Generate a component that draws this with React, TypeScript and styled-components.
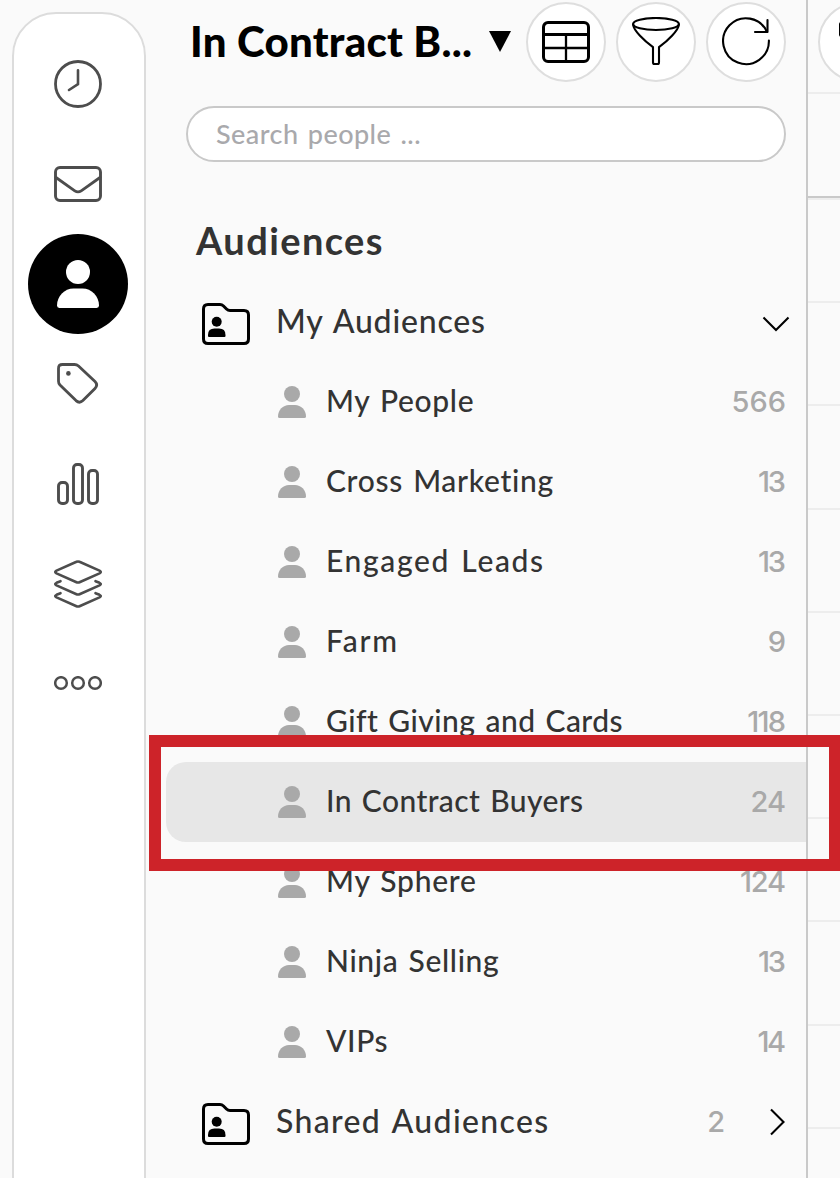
import React from "react";
import styled, { createGlobalStyle } from "styled-components";

const GlobalStyle = createGlobalStyle`
  * { box-sizing: border-box; }
  body {
    margin: 0;
    background: #fafafa;
    font-family: Lato, "Liberation Sans", sans-serif;
    color: #333;
  }
  svg { display: block; flex: none; }
`;

const Page = styled.div`
  position: relative;
  display: flex;
  width: 840px;
  height: 1178px;
  overflow: hidden;
  background: #fafafa;
`;

const Rail = styled.nav`
  flex: none;
  display: flex;
  flex-direction: column;
  align-items: flex-start;
  width: 134px;
  height: 1210px;
  margin: 12px 0 0 12px;
  padding: 20px 0 0 14px;
  border: 2px solid #dcdcdc;
  border-radius: 44px;
  background: #fff;
`;

const RailButton = styled.button<{ $active?: boolean }>`
  flex: none;
  display: flex;
  align-items: center;
  justify-content: center;
  width: 100px;
  height: 100px;
  padding: 0;
  border: 0;
  border-radius: 50%;
  background: ${(p) => (p.$active ? "#000" : "transparent")};
  color: ${(p) => (p.$active ? "#fff" : "#4d4d4d")};
`;

const Sidebar = styled.aside`
  flex: none;
  display: flex;
  flex-direction: column;
  width: 662px;
  padding-left: 20px;
  border-right: 2px solid #c9c9c9;
`;

const Header = styled.header`
  display: flex;
  align-items: center;
  gap: 10px;
  height: 80px;
  margin-top: 2px;
  padding: 0 20px 0 24px;
`;

const Title = styled.h1`
  display: flex;
  align-items: center;
  flex: 1;
  margin: 0;
  padding-bottom: 2px;
  color: #000;
  font-size: 42px;
  font-weight: 900;
  line-height: 50px;
  letter-spacing: 0.25px;
  white-space: nowrap;
`;

const Caret = styled.svg`
  margin: 1px 0 0 17px;
`;

const RoundButton = styled.button`
  flex: none;
  display: flex;
  align-items: center;
  justify-content: center;
  width: 80px;
  height: 80px;
  padding: 0;
  border: 2px solid #dedede;
  border-radius: 50%;
  background: #fff;
  color: #000;
`;

const Search = styled.div`
  display: flex;
  align-items: center;
  height: 56px;
  margin: 24px 20px 0;
  padding: 0 28px 2px;
  border: 2px solid #c9c9c9;
  border-radius: 28px;
  background: #fff;
  color: #a9a9ac;
  font-size: 27px;
  font-weight: 500;
  letter-spacing: 0.45px;
  word-spacing: 2px;
`;

const SectionTitle = styled.h2`
  margin: 40px 0 0 30px;
  height: 80px;
  font-size: 38px;
  font-weight: 700;
  line-height: 76px;
  letter-spacing: 1.4px;
`;

const Row = styled.div<{ $selected?: boolean }>`
  flex: none;
  display: flex;
  align-items: center;
  height: 80px;
  padding: 0 20px 0 112px;
  border-radius: 20px 0 0 20px;
  background: ${(p) => (p.$selected ? "#e7e7e7" : "transparent")};
`;

const GroupRow = styled(Row)`
  padding: 0 20px 0 36px;
`;

const Label = styled.span<{ $track: number; $group?: boolean }>`
  flex: 1;
  margin-left: ${(p) => (p.$group ? 26 : 20)}px;
  padding-bottom: ${(p) => (p.$group ? 3 : 5)}px;
  font-size: ${(p) => (p.$group ? 32 : 30)}px;
  font-weight: 500;
  letter-spacing: ${(p) => p.$track}px;
  word-spacing: 2px;
  white-space: nowrap;
`;

const Count = styled.span<{ $track?: number }>`
  margin-right: ${(p) => -(p.$track ?? 0)}px;
  padding-bottom: 1px;
  color: #a9a9a9;
  font-family: Inter, sans-serif;
  font-size: 29px;
  font-weight: 500;
  letter-spacing: ${(p) => p.$track ?? 0}px;
`;

const FolderIcon = styled.svg`
  margin-top: 4px;
`;

const ArrowDown = styled.svg`
  margin: 4px -4px 0 0;
`;

const ArrowRight = styled.svg`
  margin: 0 1px 0 44px;
`;

const Panel = styled.main`
  flex: 1;
  min-width: 0;
  overflow: hidden;
`;

const PanelBar = styled.div`
  height: 94px;
  padding: 2px 0 0 10px;
  border-bottom: 2px solid #ededed;
`;

const PanelHead = styled.div`
  height: 104px;
  border-bottom: 2px solid #c9c9c9;
`;

const PanelRows = styled.div`
  border-top: 2px solid #ededed;
`;

const PanelRow = styled.div`
  height: 103.2px;
  border-bottom: 2px solid #ededed;
`;

const Highlight = styled.div`
  position: absolute;
  left: 149px;
  top: 735px;
  width: 692px;
  height: 136px;
  border: 12px solid #cd2329;
`;

const stroke = {
  fill: "none",
  stroke: "currentColor",
  strokeLinecap: "round" as const,
  strokeLinejoin: "round" as const,
};

const Person = ({ width }: { width: number }) => (
  <svg width={width} height={(width * 32) / 28} viewBox="0 0 28 32" fill="currentColor">
    <circle cx="14" cy="8" r="8" />
    <path d="M0 30.4C0 24 5 19 11 19h6c6 0 11 5 11 11.4q0 1.6-1.6 1.6H1.6Q0 32 0 30.4Z" />
  </svg>
);

const PersonMark = styled.span`
  flex: none;
  color: #a9a9a9;
`;

const Clock = () => (
  <svg width="48" height="48" viewBox="0 0 48 48" {...stroke} strokeWidth="2.8">
    <circle cx="24" cy="24" r="22.5" />
    <path d="M24 10.2V24.2L15 30" strokeWidth="2.6" />
  </svg>
);

const Mail = () => (
  <svg width="48" height="36" viewBox="0 0 48 36" {...stroke} strokeWidth="2.9">
    <rect x="1.5" y="1.5" width="45" height="33" rx="4.5" />
    <path d="M2 11.5 20.8 24.8Q24 27 27.2 24.8L46 11.5" strokeWidth="2.8" />
  </svg>
);

const Tag = () => (
  <svg width="48" height="48" viewBox="0 0 48 48" {...stroke} strokeWidth="2.8">
    <path d="M8.5 4.5H20.5Q22.8 4.5 24.5 6L41 21.5Q44.3 25 41 28.4L28.9 40.6Q25.5 43.8 22 40.6L6 25Q4.500 23.400 4.500 21.200V8.500Q4.500 4.500 8.500 4.500Z" />
    <circle cx="14.400" cy="13.400" r="2.300" fill="currentColor" stroke="none" />
  </svg>
);

const Bars = () => (
  <svg width="48" height="48" viewBox="0 0 48 48" {...stroke} strokeWidth="2.9">
    <rect x="4.5" y="22.5" width="9" height="21" rx="3.5" />
    <rect x="19.5" y="4.5" width="9" height="39" rx="3.5" />
    <rect x="34.5" y="10.5" width="9" height="33" rx="3.5" />
  </svg>
);

const Layers = () => (
  <svg width="48" height="48" viewBox="0 0 48 48" {...stroke} strokeWidth="2.6">
    <path d="M22.500 1.800Q24 1.100 25.500 1.800L45.500 10.600Q48 12 45.500 13.400L25.500 22.200Q24 22.900 22.500 22.200L2.500 13.400Q0 12 2.500 10.600Z" />
    <path d="M6.500 21.200 2.500 22.800Q0 24 2.500 25.400L22.500 34.200Q24 34.900 25.500 34.200L45.500 25.400Q48 24 45.500 22.800L41.500 21.200" />
    <path d="M6.500 33.200 2.500 34.800Q0 36 2.500 37.400L22.500 46.200Q24 46.900 25.500 46.200L45.500 37.400Q48 36 45.500 34.800L41.500 33.200" />
  </svg>
);

const Dots = () => (
  <svg width="48" height="16" viewBox="0 0 48 16" {...stroke} strokeWidth="2.5">
    <circle cx="7" cy="7" r="5.8" />
    <circle cx="24" cy="7" r="5.8" />
    <circle cx="41" cy="7" r="5.8" />
  </svg>
);

const Table = () => (
  <svg width="48" height="48" viewBox="0 0 48 48" {...stroke} strokeWidth="3">
    <rect x="1.5" y="4.5" width="45" height="39" rx="4.5" />
    <path d="M2 16.5H46" />
    <path d="M2 30H46M24 17V43" strokeWidth="2.3" strokeLinecap="butt" />
  </svg>
);

const Funnel = () => (
  <svg width="48" height="50" viewBox="0 0 48 50" {...stroke} strokeWidth="2.1">
    <ellipse cx="24" cy="7" rx="22.900" ry="6" />
    <path d="M1.100 7.500C1.500 13.500 12.500 24 21 30.200V45.500Q21 47 22.500 47H25.500Q27 47 27 45.500V30.200C35.500 24 46.500 13.500 46.900 7.500" />
  </svg>
);

const Refresh = () => (
  <svg width="48" height="50" viewBox="0 0 48 50" {...stroke} strokeWidth="2.1">
    <path d="M46.900 23.500A22.900 22.900 0 1 1 45 15" />
    <path d="M45.500 3V15H33" />
  </svg>
);

const Archive = () => (
  <svg width="38" height="40" viewBox="0 0 38 40" {...stroke} strokeWidth="3">
    <rect x="1.500" y="1.500" width="35" height="12" rx="1" />
    <path d="M5 14V35Q5 38.500 8.500 38.500H29.500Q33 38.500 33 35V14M14 21H24" />
  </svg>
);

const Folder = () => (
  <FolderIcon width="48" height="42" viewBox="0 0 48 42" fill="#000">
    <path
      d="M6 1.500H18Q20 1.500 21.500 3L24.500 6Q26 7.500 28 7.500H42Q46.500 7.500 46.500 12V36Q46.500 40.500 42 40.500H6Q1.500 40.500 1.500 36V6Q1.500 1.500 6 1.500Z"
      fill="none"
      stroke="#000"
      strokeWidth="3"
    />
    <circle cx="14.700" cy="18.700" r="5" />
    <path d="M6 33V32Q6 25.600 12.500 25.600H17Q23.500 25.600 23.500 32V33Q23.500 34 22.500 34H7Q6 34 6 33Z" />
  </FolderIcon>
);

const people = [
  { name: "My People", count: 566, track: 0.65, countTrack: 0 },
  { name: "Cross Marketing", count: 13, track: 0.68, countTrack: -2.2 },
  { name: "Engaged Leads", count: 13, track: 1.65, countTrack: -2.2 },
  { name: "Farm", count: 9, track: 1.8, countTrack: 0 },
  { name: "Gift Giving and Cards", count: 118, track: 0.45, countTrack: -1.8 },
  { name: "In Contract Buyers", count: 24, track: 0.4, countTrack: -1 },
  { name: "My Sphere", count: 124, track: 0.75, countTrack: -1.3 },
  { name: "Ninja Selling", count: 13, track: 0.65, countTrack: -2.2 },
  { name: "VIPs", count: 14, track: 0.6, countTrack: -2.5 },
];

const selected = "In Contract Buyers";

export default function App() {
  return (
    <Page>
      <GlobalStyle />
      <Rail>
        <RailButton><Clock /></RailButton>
        <RailButton><Mail /></RailButton>
        <RailButton $active><Person width={42} /></RailButton>
        <RailButton><Tag /></RailButton>
        <RailButton><Bars /></RailButton>
        <RailButton><Layers /></RailButton>
        <RailButton><Dots /></RailButton>
      </Rail>
      <Sidebar>
        <Header>
          <Title>
            In Contract B...
            <Caret width="22" height="21" viewBox="0 0 22 21">
              <path d="M0 0H22L11 21Z" />
            </Caret>
          </Title>
          <RoundButton><Table /></RoundButton>
          <RoundButton><Funnel /></RoundButton>
          <RoundButton><Refresh /></RoundButton>
        </Header>
        <Search>Search people ...</Search>
        <SectionTitle>Audiences</SectionTitle>
        <GroupRow>
          <Folder />
          <Label $group $track={0.8}>My Audiences</Label>
          <ArrowDown width="28" height="16" viewBox="0 0 28 16" fill="none" stroke="#000" strokeWidth="2.1">
            <path d="M1.500 1.500 14 14 26.500 1.500" />
          </ArrowDown>
        </GroupRow>
        {people.map((p) => (
          <Row key={p.name} $selected={p.name === selected}>
            <PersonMark><Person width={28} /></PersonMark>
            <Label $track={p.track}>{p.name}</Label>
            <Count $track={p.countTrack}>{p.count}</Count>
          </Row>
        ))}
        <GroupRow>
          <Folder />
          <Label $group $track={1.35}>Shared Audiences</Label>
          <Count>2</Count>
          <ArrowRight width="16" height="28" viewBox="0 0 16 28" fill="none" stroke="#000" strokeWidth="2.1">
            <path d="M2 1.500 14.500 14 2 26.500" />
          </ArrowRight>
        </GroupRow>
      </Sidebar>
      <Panel>
        <PanelBar>
          <RoundButton><Archive /></RoundButton>
        </PanelBar>
        <PanelHead />
        <PanelRows>
          {Array.from({ length: 10 }, (_, i) => (
            <PanelRow key={i} />
          ))}
        </PanelRows>
      </Panel>
      <Highlight />
    </Page>
  );
}
